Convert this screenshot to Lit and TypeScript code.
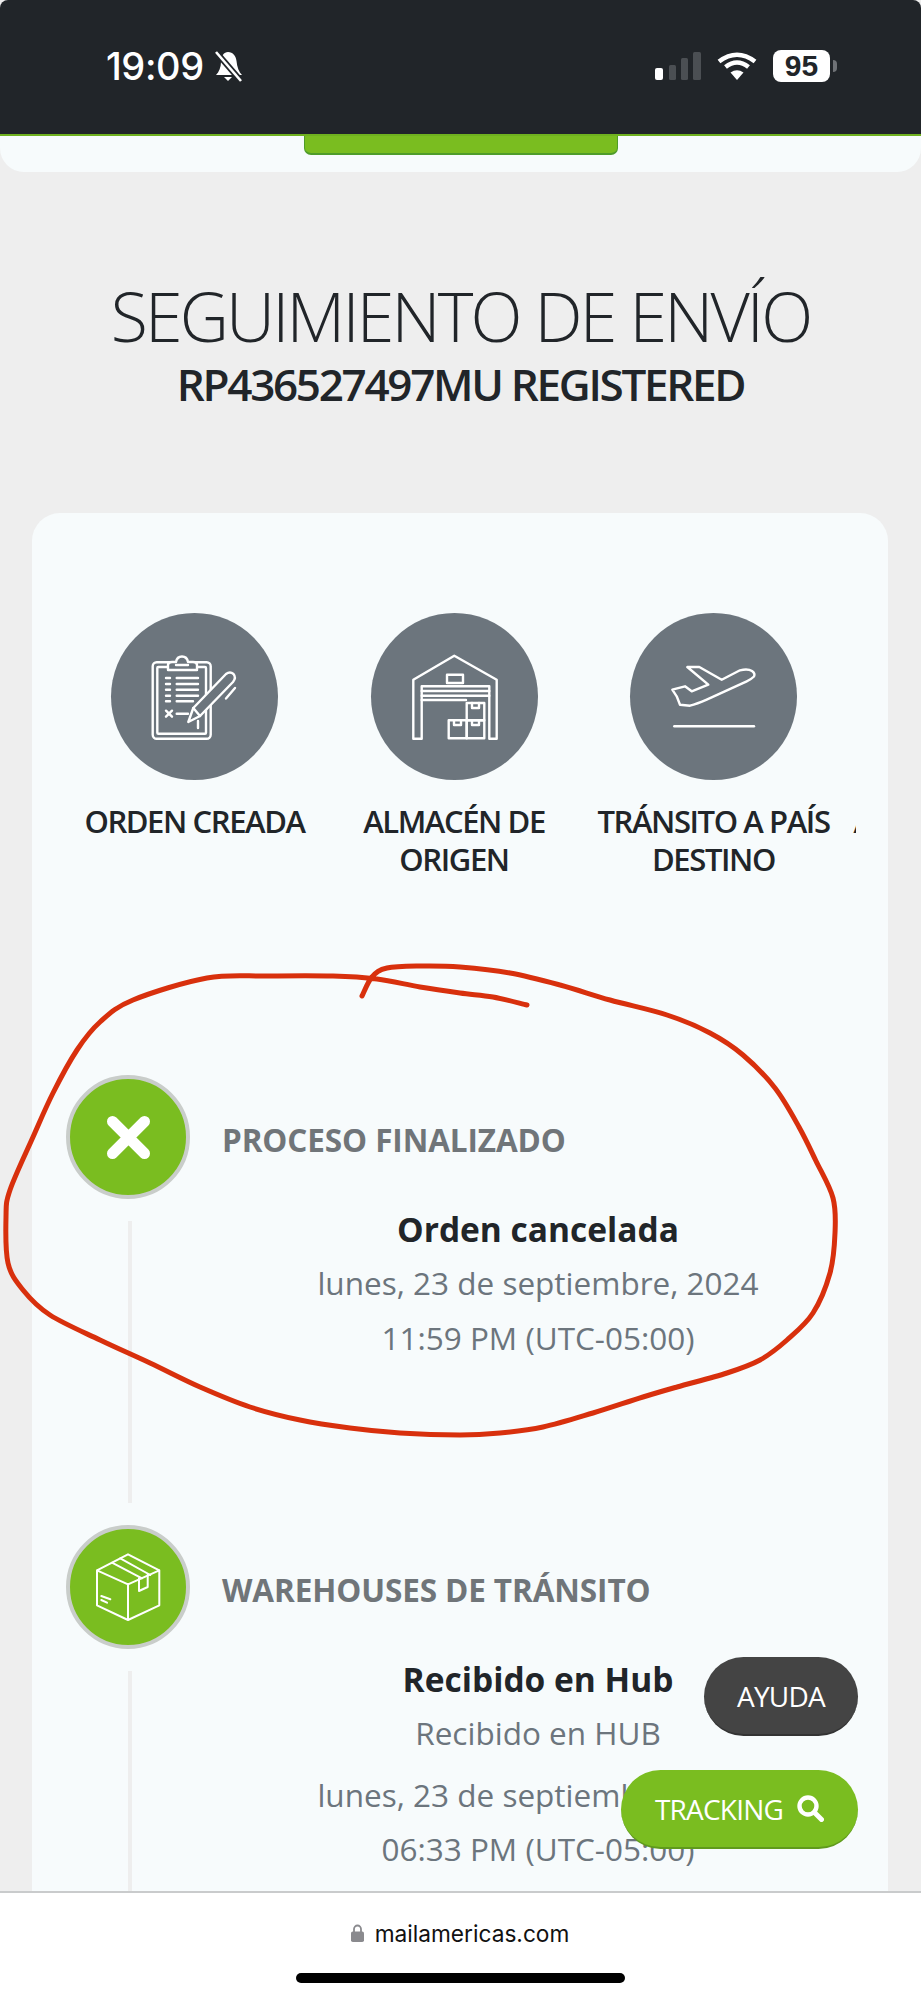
import { LitElement, html, css, svg } from "lit";
import { customElement } from "lit/decorators.js";

const RED: [number, number][] = [
  [362,996],[372,977],[387,968],[420,966],[460,967],[510,973],[560,985],[610,1000],[667,1015],[710,1033],[743,1055],[775,1088],[799,1127],[816,1161],[833,1198],[835,1233],[830,1273],[813,1313],[787,1340],[760,1360],[727,1373],[677,1387],[643,1397],[593,1413],[543,1427],[500,1433],[460,1435],[400,1433],[350,1428],[300,1420],[250,1407],[200,1387],[150,1363],[100,1340],[50,1315],[23,1290],[8,1263],[6,1217],[10,1190],[33,1137],[53,1093],[77,1050],[100,1022],[133,1000],[207,978],[267,976],[333,976],[377,979],[420,987],[460,993],[493,997],[527,1005],
];

function smooth(p: [number, number][]): string {
  let d = `M${p[0][0]} ${p[0][1]}`;
  for (let i = 0; i < p.length - 1; i++) {
    const a = p[Math.max(i - 1, 0)], b = p[i], c = p[i + 1], e = p[Math.min(i + 2, p.length - 1)];
    d += ` C${(b[0] + (c[0] - a[0]) / 6).toFixed(1)} ${(b[1] + (c[1] - a[1]) / 6).toFixed(1)} ${(c[0] - (e[0] - b[0]) / 6).toFixed(1)} ${(c[1] - (e[1] - b[1]) / 6).toFixed(1)} ${c[0]} ${c[1]}`;
  }
  return d;
}

const clipboard = svg`
  <rect x="41.7" y="49.3" width="58" height="76.4" rx="4"/>
  <rect x="46.3" y="54" width="48.7" height="66.7" rx="1"/>
  <path d="M57 57 V52 Q57 49 61 49 H65 Q66 43.5 71 43.5 Q76 43.5 77 49 H82 Q86 49 86 52 V57 Z" fill="#6c757d"/>
  <path d="M65 52 H77"/>
  <path d="M65.7 65 H87 M65.7 71 H87 M65.7 76.7 H87 M65.7 82.7 H87 M65.7 88.3 H82 M55 65 H59 M55 71 H59 M55 76.7 H59 M55 82.7 H59 M55 88.3 H59"/>
  <path d="M55 97.7 L61 103.7 M61 97.7 L55 103.7 M65.7 100.7 H77"/>
  <path d="M77.3 109 L82.3 95 L115 61 Q119 58 122.5 61 Q125.5 64.5 122 69 L89 103 Z" fill="#6c757d"/>
  <path d="M82.3 95 L89 103 M124 75 L115 85.5 M87 108 V115"/>`;

const warehouse = svg`
  <path d="M42.3 125.7 V66.7 L83.3 42.7 L125.7 66.7 V125.7 H118.3 V73.3 H50.7 V125.7 Z"/>
  <rect x="76" y="61.7" width="16" height="8.3"/>
  <path d="M50.7 78 H118.3 M50.7 82.7 H118.3 M50.7 87 H95"/>
  <rect x="95.7" y="90" width="17.6" height="17.3"/>
  <rect x="77.7" y="107.3" width="18" height="18"/>
  <rect x="95.7" y="107.3" width="17.6" height="18"/>
  <path d="M101 90 V95 H108 V90 M83 107.3 V112 H90 V107.3 M101 107.3 V112 H108 V107.3"/>`;

const plane = svg`
  <path d="M42.3 76.7 L55 73.3 L61.7 78.3 L78.3 71.7 L57.3 54 H69.3 L91.7 66.7 L110 57.3 Q118 55.5 122 58 Q125.5 60.5 124 63.5 Q121 66.5 116.7 68.3 L76.7 86.7 Q67 91 60 92.7 L50 91.7 L46.7 83.3 Z"/>
  <path d="M44.3 113.3 H124"/>`;

const box = svg`
  <path d="M62 29.3 L93.3 45.3 V80.3 L62 95 L31 80.3 V45.3 Z M31 45.3 L62 59.3 L93.3 45.3 M62 59.3 V95"/>
  <path d="M46 37.7 L76 53.3 M54.3 33.3 L84.3 50 M73 53.3 V66 L81.7 62 V49"/>
  <path d="M35.3 71 L44.3 74.3 M35.3 75 L41 77.7"/>`;

const cross = svg`<path d="M46.5 46.5 L78.5 78.5 M78.5 46.5 L46.5 78.5"/>`;

const STEPS = [
  { label: "ORDEN CREADA", icon: clipboard },
  { label: "ALMACÉN DE ORIGEN", icon: warehouse },
  { label: "TRÁNSITO A PAÍS DESTINO", icon: plane },
  { label: "ADUANA ORIGEN", icon: null },
];

const EVENTS = [
  {
    heading: "PROCESO FINALIZADO",
    icon: cross,
    iconClass: "tl-x",
    title: "Orden cancelada",
    note: "",
    date: "lunes, 23 de septiembre, 2024",
    time: "11:59 PM (UTC-05:00)",
  },
  {
    heading: "WAREHOUSES DE TRÁNSITO",
    icon: box,
    iconClass: "tl-box",
    title: "Recibido en Hub",
    note: "Recibido en HUB",
    date: "lunes, 23 de septiembre, 2024",
    time: "06:33 PM (UTC-05:00)",
  },
];

@customElement("app-root")
export class AppRoot extends LitElement {
  static styles = css`
    :host {
      display: block;
      position: relative;
      height: 2000px;
      overflow: hidden;
      background: #eeeeee;
      font-family: "Open Sans", "Noto Sans", sans-serif;
      color: #212529;
    }
    .status {
      box-sizing: border-box;
      height: 136px;
      background: #212529;
      border-bottom: 2px solid #6fb11f;
      border-radius: 8px 8px 0 0;
      padding: 50px 84px 0 106px;
      display: flex;
      justify-content: space-between;
      align-items: flex-start;
      color: #fff;
    }
    .status-left { display: flex; align-items: center; gap: 9px; height: 32px; }
    .clock {
      font-family: Inter, "Liberation Sans", sans-serif;
      font-size: 38px;
      font-weight: 500;
      line-height: 32px;
      letter-spacing: -0.4px;
    }
    .status-right { display: flex; align-items: center; height: 32px; }
    .signal { display: block; margin-right: 16px; }
    .wifi { display: block; margin-right: 16px; }
    .battery {
      width: 57px;
      height: 32px;
      border-radius: 8px;
      background: #fff;
      color: #212529;
      font-family: "Liberation Sans", sans-serif;
      font-size: 30px;
      font-weight: 700;
      line-height: 32px;
      text-align: center;
    }
    .battery-cap {
      width: 4px;
      height: 12px;
      margin-left: 3px;
      background: #6f7276;
      border-radius: 0 4px 4px 0;
    }
    .top-panel {
      height: 36px;
      background: #f7fbfc;
      border-radius: 0 0 24px 24px;
      display: flex;
      justify-content: center;
      align-items: flex-start;
    }
    .top-btn {
      width: 314px;
      height: 19px;
      box-sizing: border-box;
      background: #7abd20;
      border: 1px solid #4f9c2a;
      border-top: 0;
      border-bottom-width: 2px;
      border-radius: 0 0 7px 7px;
    }
    .title-block { text-align: center; padding-top: 104px; height: 341px; box-sizing: border-box; }
    h1 {
      margin: 0;
      font-size: 68px;
      font-weight: 300;
      line-height: 80px;
      letter-spacing: -2.8px;
    }
    h2 {
      margin: 1px 0 0;
      font-size: 44px;
      font-weight: 600;
      line-height: 54px;
      letter-spacing: -2.3px;
    }
    .card {
      margin: 0 33px 0 32px;
      background: #f7fbfc;
      border-radius: 28px;
      padding-top: 100px;
      height: 1500px;
      box-sizing: border-box;
    }
    .steps {
      margin-left: 32.75px;
      width: 791px;
      display: flex;
      overflow: hidden;
      height: 272px;
    }
    .step { flex: 0 0 259.5px; width: 259.5px; text-align: center; }
    .disc {
      display: block;
      width: 167px;
      height: 167px;
      margin: 0 auto 23px;
      border-radius: 50%;
      background: #6c757d;
    }
    .disc g { fill: none; stroke: #fff; stroke-width: 2.4; stroke-linejoin: round; stroke-linecap: round; }
    .step-label {
      font-size: 31px;
      font-weight: 600;
      line-height: 37.5px;
      letter-spacing: -1.4px;
      color: #212529;
    }
    .timeline { margin-top: 190px; padding: 0 2px 0 34px; }
    .event { height: 450px; display: grid; grid-template-columns: 124px 1fr; grid-template-rows: 124px 1fr; }
    .tl-icon {
      box-sizing: border-box;
      width: 124px;
      height: 124px;
      border-radius: 50%;
      background: #7abd20;
      border: 4px solid #c9cdca;
    }
    .tl-icon svg { display: block; width: 124px; height: 124px; margin: -4px; }
    .tl-icon g { fill: none; stroke: #fff; stroke-linecap: round; stroke-linejoin: round; }
    .tl-x g { stroke-width: 11; }
    .tl-box g { stroke-width: 2; }
    .heading {
      align-self: center;
      margin: 6px 0 0 32px;
      font-size: 31.5px;
      font-weight: 700;
      line-height: 40px;
      letter-spacing: -0.1px;
      color: #707579;
    }
    .rail { display: flex; justify-content: center; padding: 22px 0; }
    .rail i { display: block; width: 4px; margin-left: 4px; background: #eeeeee; }
    .body { text-align: center; padding-top: 3px; }
    .ev-title { font-size: 33.5px; font-weight: 700; line-height: 54px; color: #212529; }
    .ev-line { font-size: 31.5px; font-weight: 400; line-height: 54.5px; color: #6c757d; }
    .ev-note { margin-bottom: 7px; }
    .ink { position: absolute; left: 0; top: 0; pointer-events: none; }
    .fab {
      position: absolute;
      right: 63px;
      height: 79px;
      border-radius: 40px;
      box-sizing: border-box;
      display: flex;
      align-items: center;
      justify-content: center;
      color: #fff;
      font-size: 28px;
      letter-spacing: -0.8px;
    }
    .fab-help { top: 1657px; width: 154px; background: #444444; border-bottom: 2px solid #333; }
    .fab-track { top: 1770px; width: 237px; gap: 14px; background: #7abd20; border-bottom: 2px solid #5f9a1c; }
    .browser {
      position: absolute;
      left: 0;
      right: 0;
      top: 1891px;
      height: 109px;
      box-sizing: border-box;
      background: #fff;
      border-top: 2px solid #c9cbcc;
      display: flex;
      flex-direction: column;
      align-items: center;
    }
    .url {
      margin-top: 26px;
      display: flex;
      align-items: center;
      gap: 11px;
      height: 28px;
      font-family: Inter, "Liberation Sans", sans-serif;
      font-size: 22.7px;
      color: #111;
      margin-left: -1px;
    }
    .home { margin-top: 26px; width: 329px; height: 10px; border-radius: 5px; background: #000; }
  `;

  render() {
    return html`
      <div class="status">
        <div class="status-left">
          <span class="clock">19:09</span>
          <svg width="31" height="31" viewBox="0 0 31 31" fill="#fff">
            <path d="M15 1 C20 1 23 5 23.5 10 C24 16 26 21 29 24 H3 C6 21 8 16 8 11 C8 5 11 1 15 1 Z"/>
            <path d="M11 26 H19 L15 30 Z"/>
            <path d="M3 1 L28 30" stroke="#212529" stroke-width="6"/>
            <path d="M3 1 L28 30" stroke="#fff" stroke-width="2.6"/>
          </svg>
        </div>
        <div class="status-right">
          <svg class="signal" width="46" height="28" viewBox="0 0 46 28">
            <rect x="0" y="16" width="8" height="12" rx="2" fill="#fff"/>
            <rect x="14" y="13" width="7" height="15" rx="1.5" fill="#4b4f53"/>
            <rect x="26" y="6" width="7" height="22" rx="1.5" fill="#4b4f53"/>
            <rect x="38" y="0" width="8" height="28" rx="1.5" fill="#4b4f53"/>
          </svg>
          <svg class="wifi" width="40" height="28" viewBox="0 0 40 28" fill="none" stroke="#fff" stroke-width="4.6">
            <path d="M2 9.5 Q20 -4 38 9.5"/>
            <path d="M8.5 15 Q20 6 31.5 15"/>
            <path d="M20 28 L13.5 20.5 Q20 16 26.5 20.5 Z" fill="#fff" stroke="none"/>
          </svg>
          <div class="battery">95</div>
          <div class="battery-cap"></div>
        </div>
      </div>
      <div class="top-panel"><div class="top-btn"></div></div>
      <div class="title-block">
        <h1>SEGUIMIENTO DE ENVÍO</h1>
        <h2>RP436527497MU REGISTERED</h2>
      </div>
      <div class="card">
        <div class="steps">
          ${STEPS.map(
            (s) => html`<div class="step">
              <svg class="disc" viewBox="0 0 167 167"><g>${s.icon}</g></svg>
              <div class="step-label">${s.label}</div>
            </div>`
          )}
        </div>
        <div class="timeline">
          ${EVENTS.map(
            (e) => html`<div class="event">
              <div class="tl-icon ${e.iconClass}">
                <svg viewBox="0 0 124 124"><g>${e.icon}</g></svg>
              </div>
              <div class="heading">${e.heading}</div>
              <div class="rail"><i></i></div>
              <div class="body">
                <div class="ev-title">${e.title}</div>
                ${e.note ? html`<div class="ev-line ev-note">${e.note}</div>` : ""}
                <div class="ev-line">${e.date}</div>
                <div class="ev-line">${e.time}</div>
              </div>
            </div>`
          )}
        </div>
      </div>
      <svg class="ink" width="921" height="2000" viewBox="0 0 921 2000">
        <path d=${smooth(RED)} fill="none" stroke="#d8300d" stroke-width="5" stroke-linecap="round" stroke-linejoin="round"/>
      </svg>
      <div class="fab fab-help">AYUDA</div>
      <div class="fab fab-track">
        <span>TRACKING</span>
        <svg width="27" height="27" viewBox="0 0 27 27" fill="none" stroke="#fff">
          <circle cx="11" cy="11" r="8.5" stroke-width="4.4"/>
          <path d="M17.5 17.5 L24.5 24.5" stroke-width="5" stroke-linecap="round"/>
        </svg>
      </div>
      <div class="browser">
        <div class="url">
          <svg width="13" height="18" viewBox="0 0 13 18" fill="#8a8a8e">
            <path d="M3 8 V5 A3.5 3.5 0 0 1 10 5 V8" fill="none" stroke="#8a8a8e" stroke-width="1.8"/>
            <rect x="0" y="7.5" width="13" height="10.5" rx="1.8"/>
          </svg>
          <span>mailamericas.com</span>
        </div>
        <div class="home"></div>
      </div>
    `;
  }
}
